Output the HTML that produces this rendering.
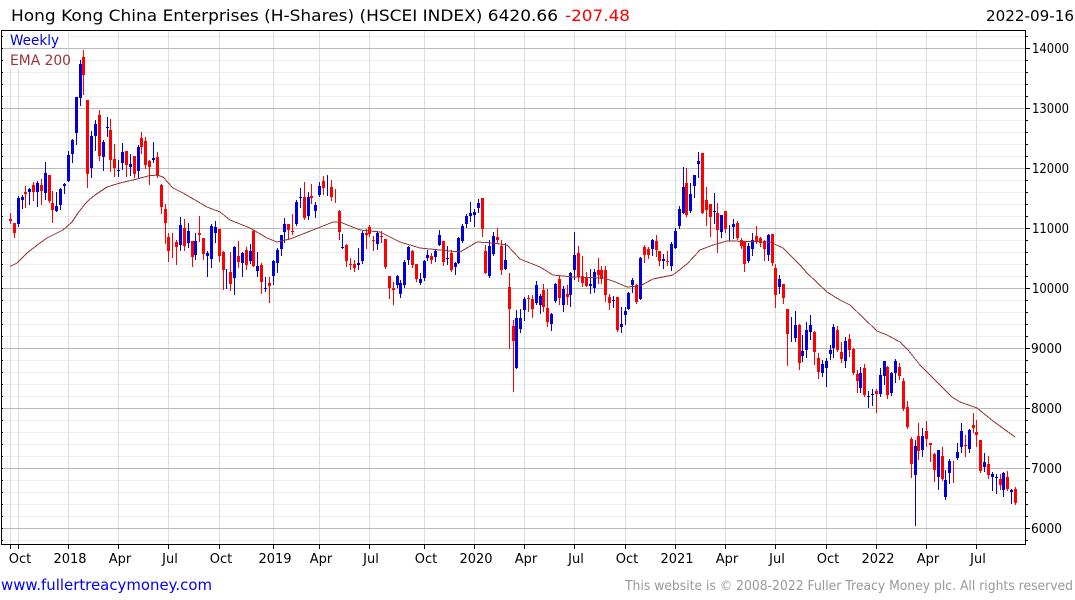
<!DOCTYPE html>
<html><head><meta charset="utf-8"><title>HSCEI</title>
<style>
html,body{margin:0;padding:0;background:#fff}
svg{display:block}
text{font-family:"DejaVu Sans","Liberation Sans",sans-serif}
.c{shape-rendering:crispEdges;fill:none}
</style></head><body>
<svg width="1075" height="600" viewBox="0 0 1075 600" xmlns="http://www.w3.org/2000/svg">
<rect width="1075" height="600" fill="#fff"/>
<path class="c" stroke="#eeeeee" d="M2 36.5H1025M2 60.5H1025M2 72.5H1025M2 84.5H1025M2 96.5H1025M2 120.5H1025M2 132.5H1025M2 144.5H1025M2 156.5H1025M2 180.5H1025M2 192.5H1025M2 204.5H1025M2 216.5H1025M2 240.5H1025M2 252.5H1025M2 264.5H1025M2 276.5H1025M2 300.5H1025M2 312.5H1025M2 324.5H1025M2 336.5H1025M2 360.5H1025M2 372.5H1025M2 384.5H1025M2 396.5H1025M2 420.5H1025M2 432.5H1025M2 444.5H1025M2 456.5H1025M2 480.5H1025M2 492.5H1025M2 504.5H1025M2 516.5H1025M2 540.5H1025"/>
<path class="c" stroke="#dddddd" d="M10.5 30V544M18.5 30V544M68.5 30V544M118.5 30V544M168.5 30V544M219.5 30V544M273.5 30V544M319.5 30V544M369.5 30V544M424.5 30V544M474.5 30V544M524.5 30V544M574.5 30V544M625.5 30V544M675.5 30V544M725.5 30V544M775.5 30V544M826.5 30V544M876.5 30V544M926.5 30V544M976.5 30V544"/>
<path class="c" stroke="#bbbbbb" d="M2 48.5H1025M2 108.5H1025M2 168.5H1025M2 228.5H1025M2 288.5H1025M2 348.5H1025M2 408.5H1025M2 468.5H1025M2 528.5H1025"/>
<rect x="3" y="31" width="65" height="16" fill="#fff"/>
<rect x="3" y="50" width="65" height="18" fill="#fff"/>
<path class="c" stroke="#ff0000" stroke-width="1" d="M10.5 213V224M14.5 223V238M25.5 186V208M33.5 182V201M41.5 179V205M49.5 175V203M52.5 191V223M83.5 50V95M87.5 100V188M99.5 110V161M110.5 119V172M114.5 144V177M126.5 151V177M134.5 156V178M141.5 132V154M145.5 137V169M149.5 160V185M157.5 152V178M161.5 184V214M165.5 204V244M168.5 233V262M172.5 233V258M176.5 240V265M184.5 219V251M192.5 241V267M199.5 216V242M203.5 238V260M219.5 229V262M223.5 251V290M230.5 252V291M238.5 241V268M246.5 247V270M253.5 230V267M261.5 263V294M269.5 277V303M288.5 224V240M292.5 214V235M304.5 182V220M311.5 184V204M323.5 176V195M331.5 180V201M335.5 189V203M339.5 210V240M346.5 244V267M350.5 258V270M354.5 260V272M366.5 229V249M369.5 225V237M373.5 236V251M381.5 231V243M385.5 239V269M389.5 276V299M393.5 282V305M412.5 250V268M416.5 264V282M431.5 253V264M443.5 241V266M451.5 250V272M482.5 198V237M485.5 245V274M497.5 228V244M501.5 240V275M509.5 273V349M513.5 320V392M528.5 295V312M532.5 295V318M543.5 284V312M547.5 289V327M559.5 275V305M567.5 285V305M578.5 246V282M582.5 256V287M586.5 272V287M598.5 258V284M601.5 266V284M605.5 266V302M609.5 294V310M617.5 297V332M636.5 284V304M644.5 245V263M648.5 247V259M656.5 235V257M659.5 251V266M667.5 251V266M686.5 168V217M702.5 153V214M706.5 187V226M710.5 204V237M717.5 203V253M725.5 211V233M737.5 221V240M741.5 238V249M744.5 242V272M756.5 226V244M760.5 237V247M764.5 240V261M772.5 234V266M775.5 264V308M783.5 284V304M787.5 309V366M799.5 324V370M814.5 331V365M818.5 353V379M837.5 326V352M841.5 342V363M849.5 334V357M853.5 348V375M857.5 370V393M864.5 364V397M876.5 389V413M887.5 366V399M899.5 363V380M903.5 378V411M907.5 401V429M911.5 437V478M918.5 423V460M926.5 421V447M930.5 443V462M934.5 453V482M942.5 447V481M953.5 461V483M965.5 435V457M973.5 413V433M976.5 420V447M980.5 440V473M988.5 456V479M1000.5 474V490M1007.5 471V491M1015.5 487V505"/>
<path class="c" stroke="#0000dd" stroke-width="1" d="M18.5 196V227M22.5 195V209M29.5 188V205M37.5 181V207M45.5 162V200M56.5 192V212M60.5 188V210M64.5 183V194M68.5 151V182M72.5 139V163M76.5 97V145M80.5 60V106M91.5 131V178M95.5 120V151M103.5 140V171M107.5 117V137M118.5 160V177M122.5 143V170M130.5 154V176M138.5 145V178M153.5 142V163M180.5 217V251M188.5 223V248M195.5 233V260M207.5 251V277M211.5 224V268M215.5 221V243M226.5 269V289M234.5 246V295M242.5 252V277M250.5 244V264M257.5 252V277M265.5 277V292M273.5 260V285M277.5 248V273M281.5 235V256M284.5 218V243M296.5 200V226M300.5 188V208M308.5 192V220M315.5 202V218M319.5 182V197M327.5 175V196M342.5 234V249M358.5 248V270M362.5 231V264M377.5 231V250M397.5 275V288M400.5 280V298M404.5 260V288M408.5 246V265M420.5 273V285M424.5 260V281M427.5 250V261M435.5 249V262M439.5 230V246M447.5 246V265M455.5 262V275M458.5 237V264M462.5 224V243M466.5 214V228M470.5 202V222M474.5 209V227M478.5 199V213M489.5 240V278M493.5 232V256M505.5 243V270M516.5 310V369M520.5 309V333M524.5 297V321M536.5 281V305M540.5 294V314M551.5 313V331M555.5 283V303M563.5 286V312M570.5 272V307M574.5 232V280M590.5 269V294M594.5 269V293M613.5 296V308M621.5 307V333M625.5 307V325M628.5 292V310M632.5 278V293M640.5 257V300M652.5 239V256M663.5 254V269M671.5 242V271M675.5 228V249M679.5 206V229M683.5 167V214M690.5 183V213M694.5 175V198M698.5 152V178M714.5 193V224M721.5 215V238M729.5 225V241M733.5 219V239M748.5 243V263M752.5 233V256M768.5 234V261M779.5 275V294M791.5 317V342M795.5 311V342M802.5 335V362M806.5 322V358M810.5 315V340M822.5 360V377M826.5 358V387M830.5 345V360M833.5 324V358M845.5 337V368M860.5 367V393M868.5 391V408M872.5 389V406M880.5 368V397M884.5 361V385M891.5 372V396M895.5 359V383M915.5 440V526M922.5 428V457M938.5 450V490M945.5 470V500M949.5 459V484M957.5 443V460M961.5 423V453M969.5 429V453M984.5 453V472M992.5 472V491M996.5 474V494M1003.5 472V497M1011.5 489V504"/>
<path class="c" stroke="#ff0000" stroke-width="3" d="M10.5 219V221M14.5 223V233M25.5 192V194M33.5 185V192M41.5 185V191M49.5 175V201M52.5 203V210M83.5 57V75M87.5 100V174M99.5 115V156M110.5 130V160M114.5 159V168M126.5 151V165M134.5 156V174M141.5 138V147M145.5 141V165M149.5 161V167M157.5 157V176M161.5 185V207M165.5 209V223M168.5 237V251M176.5 242V247M184.5 228V246M192.5 241V257M199.5 233V235M203.5 238V254M219.5 229V256M223.5 252V270M230.5 272V284M238.5 256V262M246.5 250V265M253.5 231V266M261.5 265V282M269.5 283V286M288.5 224V230M292.5 231V232M304.5 197V218M311.5 196V198M323.5 181V188M331.5 187V197M339.5 211V232M346.5 245V261M350.5 264V265M354.5 264V268M366.5 233V235M369.5 227V234M373.5 240V241M381.5 236V237M385.5 239V267M389.5 276V288M393.5 288V290M412.5 251V265M416.5 264V279M431.5 256V260M443.5 241V262M451.5 253V270M482.5 198V229M485.5 251V273M497.5 237V240M501.5 246V270M509.5 287V309M513.5 326V341M528.5 298V299M532.5 299V309M543.5 290V307M547.5 308V322M559.5 279V298M567.5 294V297M578.5 253V277M582.5 276V283M586.5 277V286M598.5 270V275M601.5 270V279M605.5 270V295M609.5 297V303M617.5 297V330M636.5 285V302M644.5 247V255M648.5 249V255M656.5 241V250M659.5 251V261M667.5 261V262M686.5 183V215M702.5 153V213M706.5 200V210M710.5 204V217M717.5 213V230M725.5 211V229M737.5 223V238M741.5 240V246M744.5 242V264M756.5 236V241M760.5 238V243M764.5 241V249M772.5 234V263M775.5 268V295M783.5 284V298M787.5 309V334M799.5 325V363M814.5 332V352M818.5 358V372M837.5 330V350M841.5 352V359M849.5 339V350M853.5 349V373M857.5 374V381M864.5 368V395M876.5 391V394M887.5 367V395M899.5 367V376M903.5 381V409M907.5 407V427M911.5 439V464M918.5 436V451M926.5 431V439M930.5 443V445M934.5 454V470M942.5 456V479M965.5 445V446M973.5 425V428M976.5 432V435M980.5 440V471M988.5 464V475M1000.5 479V485M1007.5 477V489M1015.5 489V503"/>
<path class="c" stroke="#0000dd" stroke-width="3" d="M18.5 198V224M22.5 197V200M29.5 189V192M37.5 183V192M45.5 173V193M56.5 206V211M60.5 189V205M64.5 184V186M68.5 155V181M72.5 140V154M76.5 97V133M80.5 64V98M91.5 136V168M95.5 124V136M103.5 142V157M107.5 127V128M118.5 170V171M122.5 152V163M130.5 164V167M138.5 147V171M153.5 158V160M180.5 225V245M188.5 231V243M195.5 241V255M207.5 253V256M211.5 226V259M215.5 227V233M234.5 247V278M242.5 253V263M250.5 251V261M257.5 266V271M265.5 288V289M273.5 261V276M277.5 250V263M281.5 235V249M284.5 224V232M296.5 202V224M300.5 197V198M308.5 197V216M315.5 205V211M319.5 186V195M342.5 247V248M358.5 263V265M362.5 233V261M377.5 233V244M397.5 276V285M400.5 283V294M404.5 262V285M408.5 247V260M420.5 279V283M424.5 261V278M427.5 255V258M435.5 251V257M439.5 235V245M447.5 258V259M455.5 263V267M458.5 238V263M462.5 226V241M466.5 216V224M470.5 213V216M474.5 212V215M478.5 203V208M489.5 246V276M493.5 236V254M505.5 260V269M516.5 318V368M520.5 318V329M524.5 299V310M536.5 285V303M540.5 296V305M551.5 314V324M555.5 284V301M563.5 289V305M570.5 273V295M574.5 255V270M590.5 284V286M594.5 272V288M613.5 300V301M621.5 324V327M625.5 311V315M628.5 293V309M632.5 280V285M640.5 258V299M652.5 240V249M663.5 259V261M671.5 244V266M675.5 231V248M679.5 209V226M683.5 187V213M690.5 194V211M694.5 175V186M698.5 161V164M714.5 211V212M721.5 215V232M733.5 224V227M748.5 246V261M752.5 240V249M768.5 235V255M779.5 279V287M795.5 325V338M802.5 351V356M806.5 330V350M810.5 325V332M822.5 364V373M826.5 361V368M830.5 350V354M833.5 327V348M845.5 341V361M860.5 373V388M868.5 396V397M872.5 394V395M880.5 375V394M884.5 361V376M891.5 373V393M895.5 361V373M915.5 446V475M922.5 436V450M938.5 450V477M945.5 480V497M949.5 461V473M957.5 452V458M961.5 431V447M969.5 430V449M984.5 462V467M992.5 474V477M996.5 477V478M1003.5 473V490M1011.5 490V492"/>
<polyline class="c" stroke="#993333" stroke-width="1" points="10,266.5 17,263 27,253 40,243 47,238 63,230 72,222 78,213 85,204 89,200 95,195 107,187 120,183 137,179 148,176 157,175 163,177 173,188 183,193 195,200 207,207 220,212 230,220 250,228 267,238 277,242 290,239 313,230 333,222 340,222 360,230 380,232 400,242 420,248 440,250 460,252 477,242 493,243 507,245 520,259 540,267 553,275 573,277 603,278 613,281 627,287 640,286 653,279 673,275 687,264 700,250 713,245 727,241 770,242 783,248 800,265 807,273 827,292 840,300 850,305 877,331 887,335 900,342 908,350 920,365 937,382 952,397 960,402 977,408 993,421 1015,437"/>
<path class="c" stroke="#000" d="M1.5 30V545M1025.5 30V545"/>
<path class="c" stroke="#000" d="M1 30.5H1026M1 544.5H1026"/>
<path class="c" stroke="#000" d="M1 36.5H3M1 48.5H3M1 60.5H3M1 72.5H3M1 84.5H3M1 96.5H3M1 108.5H3M1 120.5H3M1 132.5H3M1 144.5H3M1 156.5H3M1 168.5H3M1 180.5H3M1 192.5H3M1 204.5H3M1 216.5H3M1 228.5H3M1 240.5H3M1 252.5H3M1 264.5H3M1 276.5H3M1 288.5H3M1 300.5H3M1 312.5H3M1 324.5H3M1 336.5H3M1 348.5H3M1 360.5H3M1 372.5H3M1 384.5H3M1 396.5H3M1 408.5H3M1 420.5H3M1 432.5H3M1 444.5H3M1 456.5H3M1 468.5H3M1 480.5H3M1 492.5H3M1 504.5H3M1 516.5H3M1 528.5H3M1 540.5H3"/>
<path class="c" stroke="#000" d="M1026 36.5H1028M1026 48.5H1030M1026 60.5H1028M1026 72.5H1028M1026 84.5H1028M1026 96.5H1028M1026 108.5H1030M1026 120.5H1028M1026 132.5H1028M1026 144.5H1028M1026 156.5H1028M1026 168.5H1030M1026 180.5H1028M1026 192.5H1028M1026 204.5H1028M1026 216.5H1028M1026 228.5H1030M1026 240.5H1028M1026 252.5H1028M1026 264.5H1028M1026 276.5H1028M1026 288.5H1030M1026 300.5H1028M1026 312.5H1028M1026 324.5H1028M1026 336.5H1028M1026 348.5H1030M1026 360.5H1028M1026 372.5H1028M1026 384.5H1028M1026 396.5H1028M1026 408.5H1030M1026 420.5H1028M1026 432.5H1028M1026 444.5H1028M1026 456.5H1028M1026 468.5H1030M1026 480.5H1028M1026 492.5H1028M1026 504.5H1028M1026 516.5H1028M1026 528.5H1030M1026 540.5H1028"/>
<path class="c" stroke="#000" d="M10.5 545V549M18.5 545V549M68.5 545V549M118.5 545V549M168.5 545V549M219.5 545V549M273.5 545V549M319.5 545V549M369.5 545V549M424.5 545V549M474.5 545V549M524.5 545V549M574.5 545V549M625.5 545V549M675.5 545V549M725.5 545V549M775.5 545V549M826.5 545V549M876.5 545V549M926.5 545V549M976.5 545V549"/>
<text x="11" y="21" font-size="16" fill="#000" textLength="547" lengthAdjust="spacingAndGlyphs">Hong Kong China Enterprises (H-Shares) (HSCEI INDEX) 6420.66</text>
<text x="565" y="21" font-size="16" fill="#ff0000" textLength="65" lengthAdjust="spacingAndGlyphs">-207.48</text>
<text x="986" y="21" font-size="15" fill="#000" textLength="88" lengthAdjust="spacingAndGlyphs">2022-09-16</text>
<text x="10" y="45" font-size="14" fill="#0000dd" textLength="49" lengthAdjust="spacingAndGlyphs">Weekly</text>
<text x="10" y="65" font-size="14" fill="#993333" textLength="61" lengthAdjust="spacingAndGlyphs">EMA 200</text>
<g font-size="13" fill="#000">
<text x="1032" y="53" textLength="37" lengthAdjust="spacingAndGlyphs">14000</text>
<text x="1032" y="113" textLength="37" lengthAdjust="spacingAndGlyphs">13000</text>
<text x="1032" y="173" textLength="37" lengthAdjust="spacingAndGlyphs">12000</text>
<text x="1032" y="233" textLength="37" lengthAdjust="spacingAndGlyphs">11000</text>
<text x="1032" y="293" textLength="37" lengthAdjust="spacingAndGlyphs">10000</text>
<text x="1031" y="353" textLength="31" lengthAdjust="spacingAndGlyphs">9000</text>
<text x="1031" y="413" textLength="31" lengthAdjust="spacingAndGlyphs">8000</text>
<text x="1031" y="473" textLength="31" lengthAdjust="spacingAndGlyphs">7000</text>
<text x="1031" y="533" textLength="31" lengthAdjust="spacingAndGlyphs">6000</text>
</g>
<g font-size="13" fill="#000" text-anchor="middle">
<text x="20" y="563">Oct</text>
<text x="70" y="563">2018</text>
<text x="120" y="563">Apr</text>
<text x="170" y="563">Jul</text>
<text x="221" y="563">Oct</text>
<text x="275" y="563">2019</text>
<text x="321" y="563">Apr</text>
<text x="371" y="563">Jul</text>
<text x="426" y="563">Oct</text>
<text x="476" y="563">2020</text>
<text x="526" y="563">Apr</text>
<text x="576" y="563">Jul</text>
<text x="627" y="563">Oct</text>
<text x="677" y="563">2021</text>
<text x="727" y="563">Apr</text>
<text x="777" y="563">Jul</text>
<text x="828" y="563">Oct</text>
<text x="878" y="563">2022</text>
<text x="928" y="563">Apr</text>
<text x="978" y="563">Jul</text>
</g>
<text x="1" y="590" font-size="15" fill="#0000ff" textLength="211" lengthAdjust="spacingAndGlyphs">www.fullertreacymoney.com</text>
<text x="625" y="590" font-size="13" fill="#999999" textLength="448" lengthAdjust="spacingAndGlyphs">This website is © 2008-2022 Fuller Treacy Money plc. All rights reserved</text>
</svg>
</body></html>
